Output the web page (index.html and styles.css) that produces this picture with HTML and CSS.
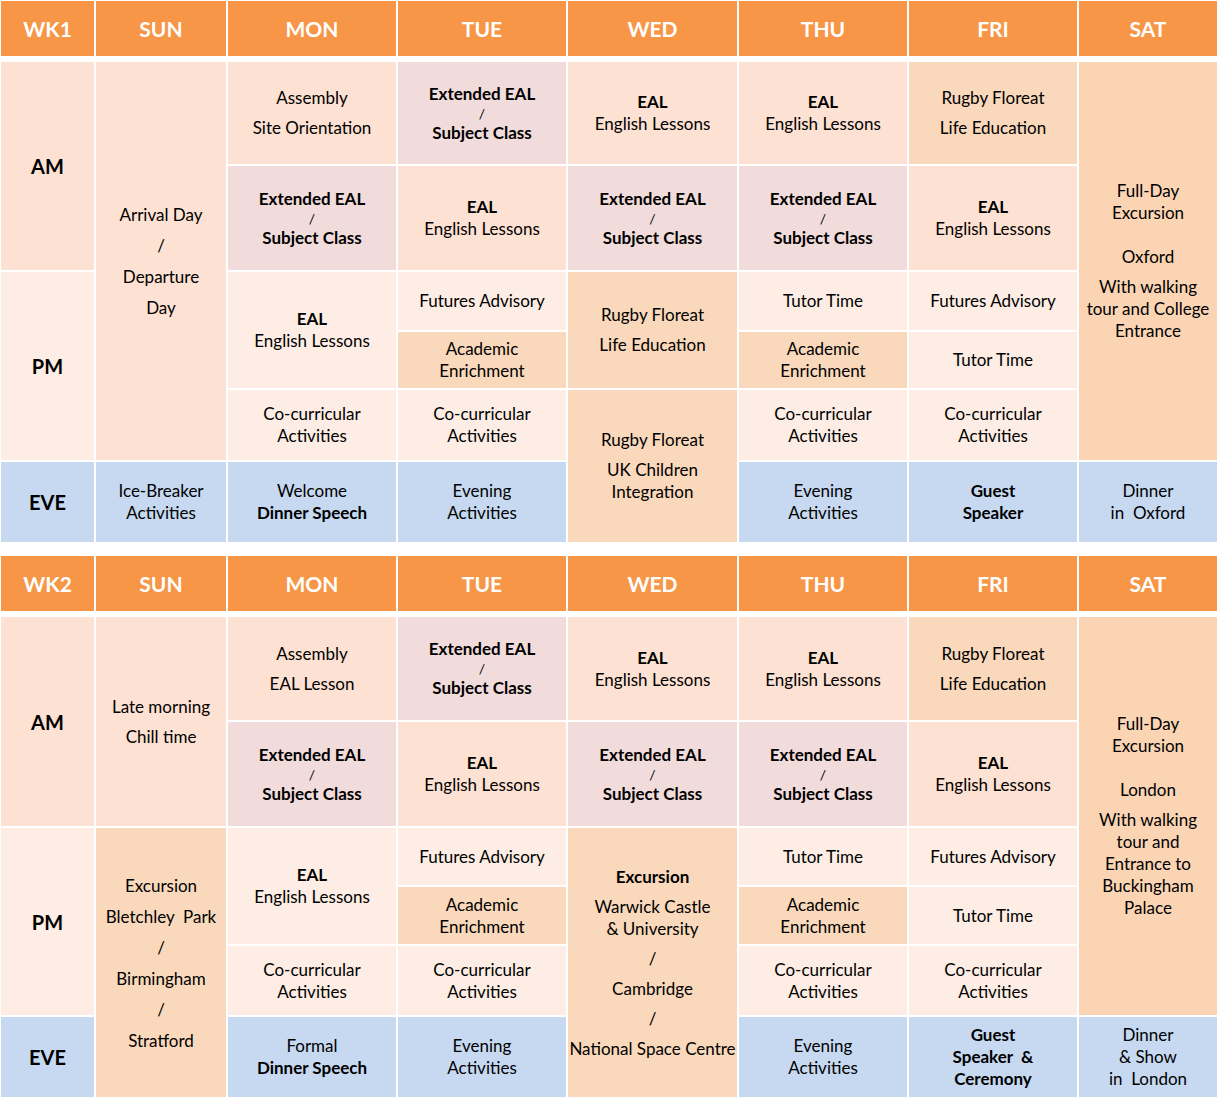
FILE: index.html
```html
<!DOCTYPE html>
<html lang="en">
<head>
<meta charset="utf-8">
<title>Timetable</title>
<link rel="stylesheet" href="styles.css">
</head>
<body>
<div class="page">

  <section class="week wk1">
    <div class="head">
      <div>WK1</div><div>SUN</div><div>MON</div><div>TUE</div><div>WED</div><div>THU</div><div>FRI</div><div>SAT</div>
    </div>
    <div class="grid">
      <!-- row 1 -->
      <div class="c am lbl span2">AM</div>
      <div class="c am loose span5"><span>Arrival Day</span><span>/</span><span>Departure</span><span>Day</span></div>
      <div class="c am"><span>Assembly</span><span class="p">Site Orientation</span></div>
      <div class="c ext"><span class="b">Extended EAL</span><span class="sl">/</span><span class="b">Subject Class</span></div>
      <div class="c am"><span class="b">EAL</span><span>English Lessons</span></div>
      <div class="c am"><span class="b">EAL</span><span>English Lessons</span></div>
      <div class="c org"><span>Rugby Floreat</span><span class="p">Life Education</span></div>
      <div class="c sat span5"><span>Full-Day</span><span>Excursion</span><span class="blank">Oxford</span><span class="p">With walking</span><span>tour and College</span><span>Entrance</span></div>
      <!-- row 2 -->
      <div class="c ext"><span class="b">Extended EAL</span><span class="sl">/</span><span class="b">Subject Class</span></div>
      <div class="c am"><span class="b">EAL</span><span>English Lessons</span></div>
      <div class="c ext"><span class="b">Extended EAL</span><span class="sl">/</span><span class="b">Subject Class</span></div>
      <div class="c ext"><span class="b">Extended EAL</span><span class="sl">/</span><span class="b">Subject Class</span></div>
      <div class="c am"><span class="b">EAL</span><span>English Lessons</span></div>
      <!-- row 3 -->
      <div class="c pm lbl span3">PM</div>
      <div class="c pm span2"><span class="b">EAL</span><span>English Lessons</span></div>
      <div class="c pm"><span>Futures Advisory</span></div>
      <div class="c org span2"><span>Rugby Floreat</span><span class="p">Life Education</span></div>
      <div class="c pm"><span>Tutor Time</span></div>
      <div class="c pm"><span>Futures Advisory</span></div>
      <!-- row 4 -->
      <div class="c org"><span>Academic</span><span>Enrichment</span></div>
      <div class="c org"><span>Academic</span><span>Enrichment</span></div>
      <div class="c pm"><span>Tutor Time</span></div>
      <!-- row 5 -->
      <div class="c pm"><span>Co-curricular</span><span>Activities</span></div>
      <div class="c pm"><span>Co-curricular</span><span>Activities</span></div>
      <div class="c org span2"><span>Rugby Floreat</span><span class="p">UK Children</span><span>Integration</span></div>
      <div class="c pm"><span>Co-curricular</span><span>Activities</span></div>
      <div class="c pm"><span>Co-curricular</span><span>Activities</span></div>
      <!-- row 6 -->
      <div class="c eve lbl">EVE</div>
      <div class="c eve"><span>Ice-Breaker</span><span>Activities</span></div>
      <div class="c eve"><span>Welcome</span><span class="b">Dinner Speech</span></div>
      <div class="c eve"><span>Evening</span><span>Activities</span></div>
      <div class="c eve"><span>Evening</span><span>Activities</span></div>
      <div class="c eve"><span class="b">Guest</span><span class="b">Speaker</span></div>
      <div class="c eve"><span>Dinner</span><span>in&nbsp; Oxford</span></div>
    </div>
  </section>

  <section class="week wk2">
    <div class="head">
      <div>WK2</div><div>SUN</div><div>MON</div><div>TUE</div><div>WED</div><div>THU</div><div>FRI</div><div>SAT</div>
    </div>
    <div class="grid">
      <!-- row 1 -->
      <div class="c am lbl span2">AM</div>
      <div class="c am span2"><span>Late morning</span><span class="p">Chill time</span></div>
      <div class="c am"><span>Assembly</span><span class="p">EAL Lesson</span></div>
      <div class="c ext"><span class="b">Extended EAL</span><span class="sl">/</span><span class="b">Subject Class</span></div>
      <div class="c am"><span class="b">EAL</span><span>English Lessons</span></div>
      <div class="c am"><span class="b">EAL</span><span>English Lessons</span></div>
      <div class="c org"><span>Rugby Floreat</span><span class="p">Life Education</span></div>
      <div class="c sat span5"><span>Full-Day</span><span>Excursion</span><span class="blank">London</span><span class="p">With walking</span><span>tour and</span><span>Entrance to</span><span>Buckingham</span><span>Palace</span></div>
      <!-- row 2 -->
      <div class="c ext"><span class="b">Extended EAL</span><span class="sl">/</span><span class="b">Subject Class</span></div>
      <div class="c am"><span class="b">EAL</span><span>English Lessons</span></div>
      <div class="c ext"><span class="b">Extended EAL</span><span class="sl">/</span><span class="b">Subject Class</span></div>
      <div class="c ext"><span class="b">Extended EAL</span><span class="sl">/</span><span class="b">Subject Class</span></div>
      <div class="c am"><span class="b">EAL</span><span>English Lessons</span></div>
      <!-- row 3 -->
      <div class="c pm lbl span3">PM</div>
      <div class="c org loose span4"><span>Excursion</span><span>Bletchley&nbsp; Park</span><span>/</span><span>Birmingham</span><span>/</span><span>Stratford</span></div>
      <div class="c pm span2"><span class="b">EAL</span><span>English Lessons</span></div>
      <div class="c pm"><span>Futures Advisory</span></div>
      <div class="c org span4 trip"><span class="b">Excursion</span><span class="p">Warwick Castle</span><span>&amp; University</span><span class="p">/</span><span class="p">Cambridge</span><span class="p">/</span><span class="p">National Space Centre</span></div>
      <div class="c pm"><span>Tutor Time</span></div>
      <div class="c pm"><span>Futures Advisory</span></div>
      <!-- row 4 -->
      <div class="c org"><span>Academic</span><span>Enrichment</span></div>
      <div class="c org"><span>Academic</span><span>Enrichment</span></div>
      <div class="c pm"><span>Tutor Time</span></div>
      <!-- row 5 -->
      <div class="c pm"><span>Co-curricular</span><span>Activities</span></div>
      <div class="c pm"><span>Co-curricular</span><span>Activities</span></div>
      <div class="c pm"><span>Co-curricular</span><span>Activities</span></div>
      <div class="c pm"><span>Co-curricular</span><span>Activities</span></div>
      <!-- row 6 -->
      <div class="c eve lbl">EVE</div>
      <div class="c eve"><span>Formal</span><span class="b">Dinner Speech</span></div>
      <div class="c eve"><span>Evening</span><span>Activities</span></div>
      <div class="c eve"><span>Evening</span><span>Activities</span></div>
      <div class="c eve"><span class="b">Guest</span><span class="b">Speaker&nbsp; &amp;</span><span class="b">Ceremony</span></div>
      <div class="c eve"><span>Dinner</span><span>&amp; Show</span><span>in&nbsp; London</span></div>
    </div>
  </section>

</div>
</body>
</html>
```

FILE: styles.css
```css
html, body {
  margin: 0;
  padding: 0;
  background: #ffffff;
}

body {
  font-family: Lato, "Open Sans", "Liberation Sans", sans-serif;
  color: #000000;
}

.page {
  padding: 1px 0 0 1px;
  width: 1216px;
}

.week + .week {
  margin-top: 14px;
}

.head,
.grid {
  display: grid;
  grid-template-columns: 93px 130px 168px 168px 169px 168px 168px 138px;
  gap: 2px;
}

.head {
  grid-template-rows: 55px;
}

.head div {
  background: #f79646;
  color: #ffffff;
  font-weight: 700;
  font-size: 21px;
  display: flex;
  align-items: center;
  justify-content: center;
}

.grid {
  margin-top: 6px;
}

.wk1 .grid {
  grid-template-rows: 102px 104px 58px 56px 70px 80px;
}

.wk2 .grid {
  grid-template-rows: 103px 104px 57px 57px 69px 80px;
}

.c {
  display: flex;
  flex-direction: column;
  align-items: center;
  justify-content: center;
  text-align: center;
  font-size: 17px;
  line-height: 22px;
  white-space: nowrap;
}

.c span {
  display: block;
}

.span2 { grid-row: span 2; }
.span3 { grid-row: span 3; }
.span4 { grid-row: span 4; }
.span5 { grid-row: span 5; }

.am  { background: #fde1d2; }
.pm  { background: #fdede5; }
.ext { background: #f2dcdb; }
.org { background: #fad8bb; }
.sat { background: #fbd4b4; }
.eve { background: #c6d9f1; }

.lbl {
  font-weight: 700;
  font-size: 20px;
}

.b {
  font-weight: 700;
}

.c .p {
  margin-top: 8px;
}

.c .blank {
  margin-top: 22px;
}

.ext span {
  line-height: 20px;
}

.ext .sl {
  font-size: 14px;
  line-height: 19px;
}

.loose span {
  line-height: 31px;
}
```
